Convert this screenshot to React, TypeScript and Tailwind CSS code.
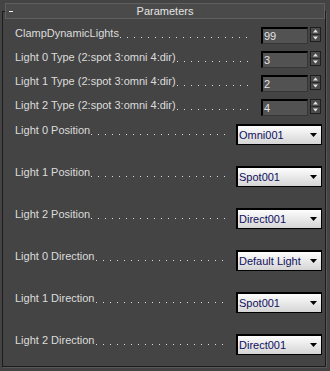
import React from 'react';

const spinnerRows = [
  { label: 'ClampDynamicLights', value: '99' },
  { label: 'Light 0 Type (2:spot 3:omni 4:dir)', value: '3' },
  { label: 'Light 1 Type (2:spot 3:omni 4:dir)', value: '2' },
  { label: 'Light 2 Type (2:spot 3:omni 4:dir)', value: '4' },
];

const dropRows = [
  { label: 'Light 0 Position', value: 'Omni001' },
  { label: 'Light 1 Position', value: 'Spot001' },
  { label: 'Light 2 Position', value: 'Direct001' },
  { label: 'Light 0 Direction', value: 'Default Light' },
  { label: 'Light 1 Direction', value: 'Spot001' },
  { label: 'Light 2 Direction', value: 'Direct001' },
];

// label followed by dotted leader (drawn as a 1px repeating gradient)
const Label: React.FC<{ text: string; width: string }> = ({ text, width }) => (
  <div className={`flex ${width} whitespace-nowrap`}>
    <span>{text}</span>
    <div className="flex-1 ml-[1px] mt-[10px] h-[1px] bg-[repeating-linear-gradient(90deg,#d4dce4_0px,#d4dce4_1px,transparent_1px,transparent_7px)]" />
  </div>
);

const Spinner: React.FC = () => (
  <div className="ml-[2px] w-[11px] h-[15px] border border-[#1e1e1e] bg-[#4b4b4b]">
    <svg width="9" height="13" viewBox="0 0 9 13">
      <path d="M2 4.5 L4.5 1.5 L7 4.5 Z" fill="#e6e6e6" />
      <line x1="0" y1="6.5" x2="9" y2="6.5" stroke="#2a2a2a" strokeWidth="1" />
      <path d="M2 8.5 L7 8.5 L4.5 11.5 Z" fill="#e6e6e6" />
    </svg>
  </div>
);

const App: React.FC = () => {
  return (
    <div className="w-[330px] h-[371px] bg-[#444444] overflow-hidden font-['Liberation_Sans',Arial,sans-serif] text-[11px] leading-[13px] text-[#dcdcdc]">
      {/* Rollout header */}
      <div className="relative z-10 mx-[5px] mt-[3px] h-[16px] border border-[#5f5f5f] bg-[#4a4a4a] grid grid-cols-[20px_1fr_20px] items-center">
        <div className="ml-[3px] w-[4px] h-[1px] bg-[#f0f0f0]" />
        <div className="text-center text-[#e4e4e4]">Parameters</div>
        <div />
      </div>

      {/* Group box */}
      <div className="-mt-[8px] ml-[2px] w-[324px] h-[356px] border border-[#1c1c1c] shadow-[1px_1px_0_#575757] pt-[15px]">
        {spinnerRows.map(r => (
          <div key={r.label} className="flex items-start h-[24px] pl-[12px]">
            <Label text={r.label} width="w-[234px]" />
            <div className="ml-[12px] w-[47px] h-[17px] border-t-2 border-l-2 border-r border-b border-t-black border-l-black border-r-[#363636] border-b-[#363636] bg-[#525252] pl-[1px] pt-[1px] leading-[13px] text-[#e2e2e2]">
              {r.value}
            </div>
            <Spinner />
          </div>
        ))}

        <div className="mt-[1px]">
          {dropRows.map(r => (
            <div key={r.label} className="flex items-start h-[42px] pl-[12px]">
              <Label text={r.label} width="w-[214px]" />
              <div className="ml-[7px] w-[86px] h-[21px] border-t-2 border-l-2 border-r border-b border-black bg-linear-to-b from-[#fdfdfd] to-[#d5d5d5] flex items-center pl-[1px] pr-[4px] text-[#10105e]">
                <span className="flex-1 whitespace-nowrap">{r.value}</span>
                <svg width="7" height="4" viewBox="0 0 7 4">
                  <path d="M0 0 H7 L3.5 4 Z" fill="#000" />
                </svg>
              </div>
            </div>
          ))}
        </div>
      </div>
    </div>
  );
};

export default App;
